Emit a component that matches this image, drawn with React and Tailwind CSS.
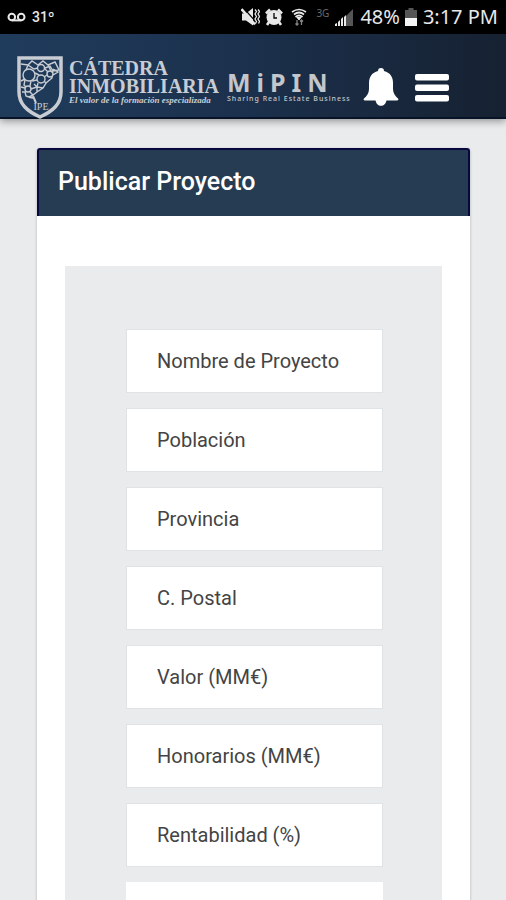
import { useState } from "react";

const FIELDS = [
  { id: "nombre", label: "Nombre de Proyecto" },
  { id: "poblacion", label: "Población" },
  { id: "provincia", label: "Provincia" },
  { id: "postal", label: "C. Postal" },
  { id: "valor", label: "Valor (MM€)" },
  { id: "honorarios", label: "Honorarios (MM€)" },
  { id: "rentabilidad", label: "Rentabilidad (%)" },
];

const StatusBar = () => (
  <div className="flex h-[34px] items-center justify-between bg-black pl-[7px] pr-2 font-['Noto_Sans',sans-serif] text-[#e8e8e8]">
    <div className="flex items-center gap-[6px]">
      <svg width="19" height="10" viewBox="0 0 19 10" fill="none" stroke="currentColor" strokeWidth="2">
        <circle cx="4.8" cy="5" r="3.3" />
        <circle cx="14.2" cy="5" r="3.3" />
        <path d="M4.8 8.4h9.4" />
      </svg>
      <span className="font-['Roboto',sans-serif] text-sm font-medium">31º</span>
    </div>

    <div className="flex items-center">
      <svg className="mr-[5px]" width="19" height="18" viewBox="0 0 19 18">
        <path d="M1 5.500h4L12 0v17.500l-7-5H1z" fill="currentColor" />
        <path d="M2.500 0l13 14.500" stroke="#000" strokeWidth="1.200" />
        <path d="M.5 1l13.500 15.500" stroke="currentColor" strokeWidth="2.600" />
        <path d="M14 1.500l1.500 2-1.500 2.500 1.500 2.500-1.500 2.500 1.500 2.500-1 2M17 1.500l1.500 2-1.500 2.500 1.500 2.500-1.500 2.500 1.500 2.500-1 2" fill="none" stroke="currentColor" strokeWidth="1.300" />
      </svg>
      <svg className="mr-2" width="18" height="18" viewBox="0 0 18 18">
        <circle cx="9" cy="9.500" r="7.500" fill="currentColor" />
        <path d="M1 5.500L5 1.500M17 5.500l-4-4M4 14l-2 3M14 14l2 3" stroke="currentColor" strokeWidth="2.600" />
        <path d="M9 5v5h3" fill="none" stroke="#000" strokeWidth="1.300" />
      </svg>
      <svg className="mr-[9px]" width="16" height="18" viewBox="0 0 16 18" fill="none" stroke="currentColor">
        <path d="M1 4q7-5 14 0M3 6.500q5-4 10 0M4.500 9q3.500-3 7 0" strokeWidth="1.700" />
        <path d="M6 9.500h4l-2 2.500z" fill="currentColor" />
        <path d="M6 12v5M4.500 15.500L6 17l1.500-1.500M10.500 17v-5M9 13.500l1.500-1.500 1.500 1.500" stroke="#858585" strokeWidth="1.300" />
      </svg>
      <span className="mr-[6px] -mt-2 text-[10px] text-[#686868]">3G</span>
      <svg className="mr-[7px]" width="18" height="18" viewBox="0 0 18 18">
        <path d="M10 9l8-8v17h-8z" fill="#555" />
        <path d="M0 18v-2l2-1v3zM3 18v-4l2-2v6zM6 18v-7l2-2v9zM9 18V9l2-2v11z" fill="currentColor" />
      </svg>
      <span className="text-xl">48%</span>
      <svg className="mr-[6px] ml-[5px]" width="12" height="18" viewBox="0 0 12 18">
        <path d="M3.500 0h5v2H12v16H0V2h3.500z" fill="#555" />
        <path d="M0 10h12v8H0z" fill="#f4f4f4" />
      </svg>
      <span className="text-xl">3:17 PM</span>
    </div>
  </div>
);

const Shield = () => (
  <svg width="46" height="63" viewBox="0 0 46 63" fill="none" stroke="#c9cdd3">
    <path d="M2 2h42v34c0 12-8 19-21 25C10 55 2 48 2 36z" strokeWidth="3.500" />
    <g strokeWidth="1.400">
      <circle cx="12" cy="19" r="6" />
      <circle cx="24" cy="12" r="3.500" />
      <circle cx="24" cy="23" r="4" />
      <circle cx="33" cy="18" r="3" />
      <circle cx="11" cy="33" r="3" />
      <path d="M4 8l7 1 4-4 6 4 5-4 5 4 7-3 4 8-6 1-3-5-5 2M11 9l-2 5M11 9l6 4 4-1M18 17l4 2M28 13l3 3M31 9l3 6M37 13l-2 4M27 21l3-2M36 19l5-3-5-3M4 25l4-2M8 24l-1 5 2 2M14 25l-1 5M15 25l5-1M14 33l6-2 1-4M20 31l6 1 3-5-2-2M29 27l6-5v-2M4 31l4 1M13 36l3 3 4-3v-5M16 39l-4 2M20 36l6-4M8 36l1 4 3 1M5 36h4M17 28l3 3" />
      <path d="M16 40l3 7M12 41l5 1" strokeWidth="2" />
    </g>
    <text x="24" y="54" textAnchor="middle" fill="#c9cdd3" stroke="none" className="font-['Liberation_Serif',serif] text-[10px]">
      IPE
    </text>
  </svg>
);

const Header = () => (
  <header className="relative flex h-[85px] items-start border-b-2 border-[#081328] bg-linear-to-r from-[#203c5c] via-[#1b304c] to-[#162131] pl-[17px] shadow-[0_2px_8px_rgba(0,0,0,0.4)]">
    <a href="#inicio" aria-label="Cátedra Inmobiliaria" className="flex shrink-0 pt-[22px] text-[#c9cdd3]">
      <Shield />
      <div className="ml-[6px] w-[150px] pt-[3px] font-['Liberation_Serif',serif] font-bold whitespace-nowrap">
        <div className="text-xl leading-[18px]">CÁTEDRA</div>
        <div className="text-xl leading-[18px]">INMOBILIARIA</div>
        <div className="text-[9px] leading-[11px] italic">El valor de la formación especializada</div>
      </div>
    </a>
    <a href="#mipin" className="ml-2 w-[128px] shrink-0 pt-9 font-['Noto_Sans',sans-serif] whitespace-nowrap text-[#c3c6ca]">
      <div className="text-[25px] leading-6 font-bold tracking-[6px]">MiPIN</div>
      <div className="text-[7px] leading-[10px] font-medium tracking-[1px]">Sharing Real Estate Business</div>
    </a>
    <button type="button" aria-label="Notificaciones" className="ml-2 mt-[34px] shrink-0">
      <svg width="36" height="38" viewBox="0 0 36 38" fill="#fff">
        <path d="M18 0c2 0 3 1 3 3 6 1.500 9 6 9 12v6c0 4 2 7 5 9.500.8 1 .3 2-1 2H2c-1.300 0-1.800-1-1-2C4 28 6 25 6 21v-6C6 9 9 4.500 15 3c0-2 1-3 3-3zM12.500 32h11c-.4 3.800-2.800 5.800-5.500 5.800s-5.100-2-5.500-5.800z" />
      </svg>
    </button>
    <button type="button" aria-label="Menú" className="ml-4 mt-10 shrink-0">
      <svg width="34" height="28" viewBox="0 0 34 28" fill="#fff">
        <rect width="34" height="6.500" rx="2" />
        <rect y="10.500" width="34" height="6.500" rx="2" />
        <rect y="21" width="34" height="6.500" rx="2" />
      </svg>
    </button>
  </header>
);

export default function App() {
  const [project, setProject] = useState({});

  const handleChange = (e) => {
    const { id, value } = e.target;
    setProject((prev) => ({ ...prev, [id]: value }));
  };

  return (
    <div className="min-h-screen bg-[#e9ebed] font-['Roboto',sans-serif]">
      <StatusBar />
      <Header />

      <main className="pt-[29px] pr-9 pb-8 pl-[37px]">
        <section className="rounded-t-[3px] bg-white pb-7 shadow-[0_1px_3px_rgba(0,0,0,0.25)]">
          <h1 className="flex h-[68px] items-center rounded-t-[3px] border-2 border-b-0 border-[#08083f] bg-[#263c53] px-[19px] pb-[2px] text-[25px] font-medium text-white">
            Publicar Proyecto
          </h1>

          <form className="mx-7 mt-[50px] flex flex-col gap-[15px] bg-[#e9ebec] pt-[63px] pr-[59px] pb-15 pl-[61px]">
            {FIELDS.map((field) => (
              <input
                key={field.id}
                id={field.id}
                type="text"
                aria-label={field.label}
                placeholder={field.label}
                value={project[field.id] ?? ""}
                onChange={handleChange}
                className="h-16 w-full border border-[#e0e3e5] bg-white px-[30px] text-xl text-[#444] outline-none placeholder:text-[#444]"
              />
            ))}
            <textarea
              id="descripcion"
              aria-label="Descripción"
              value={project.descripcion ?? ""}
              onChange={handleChange}
              className="h-32 w-full resize-none bg-white px-[30px] py-5 text-xl text-[#444] outline-none"
            />
          </form>
        </section>
      </main>
    </div>
  );
}
